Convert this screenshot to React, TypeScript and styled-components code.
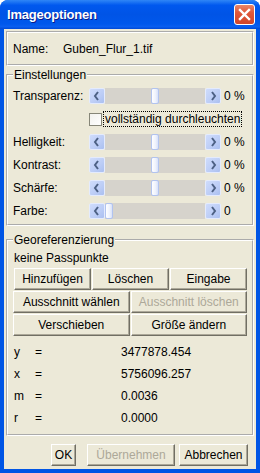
import React from 'react';
import styled, { createGlobalStyle } from 'styled-components';

const GlobalStyle = createGlobalStyle`
  html, body {
    margin: 0;
    padding: 0;
    background: #ffffff;
  }
  body {
    font-family: "Liberation Sans", Arial, sans-serif;
    font-size: 12px;
    color: #000000;
  }
`;

interface SliderRowI {
  label: string;
  value: number;
  min: number;
  max: number;
  unit?: string;
}

const sliders: Array<SliderRowI> = [
  { label: 'Helligkeit:', value: 0, min: -100, max: 100, unit: ' %' },
  { label: 'Kontrast:', value: 0, min: -100, max: 100, unit: ' %' },
  { label: 'Schärfe:', value: 0, min: -100, max: 100, unit: ' %' },
  { label: 'Farbe:', value: 0, min: 0, max: 360 },
];

const coords = [
  { name: 'y', value: '3477878.454' },
  { name: 'x', value: '5756096.257' },
  { name: 'm', value: '0.0036' },
  { name: 'r', value: '0.0000' },
];

const TRACK = 100;
const THUMB = 8;

const Chevron: React.FC<{ dir: 'left' | 'right' }> = ({ dir }) => (
  <svg width="14" height="14" viewBox="0 0 14 14">
    <polyline
      points={dir === 'left' ? '8,3 5,7 8,11' : '6,3 9,7 6,11'}
      fill="none"
      stroke="#4D6185"
      strokeWidth="2"
    />
  </svg>
);

const Slider: React.FC<{ value: number; min: number; max: number }> = ({ value, min, max }) => {
  const left = Math.round(((value - min) / (max - min)) * (TRACK - THUMB));
  return (
    <SliderBox>
      <ArrowButton>
        <Chevron dir="left" />
      </ArrowButton>
      <Track>
        <Thumb style={{ left }} />
      </Track>
      <ArrowButton>
        <Chevron dir="right" />
      </ArrowButton>
    </SliderBox>
  );
};

const App: React.FC = () => {
  return (
    <>
      <GlobalStyle />
      <Window>
        <TitleBar>
          <Title>Imageoptionen</Title>
          <CloseButton>
            <svg width="19" height="19" viewBox="0 0 19 19">
              <path d="M5 5 L14 14 M14 5 L5 14" stroke="#ffffff" strokeWidth="2.4" strokeLinecap="square" />
            </svg>
          </CloseButton>
        </TitleBar>
        <Body>
          <NamePanel>
            <NameLabel>Name:</NameLabel>
            <span>Guben_Flur_1.tif</span>
          </NamePanel>

          <Group $mt={2}>
            <Legend>Einstellungen</Legend>
            <SettingsGrid>
              <RowLabel>Transparenz:</RowLabel>
              <Slider value={0} min={-100} max={100} />
              <RowValue>0 %</RowValue>

              <CheckRow>
                <CheckBox />
                <CheckLabel>vollständig durchleuchten</CheckLabel>
              </CheckRow>

              {sliders.map(s => (
                <React.Fragment key={s.label}>
                  <RowLabel>{s.label}</RowLabel>
                  <Slider value={s.value} min={s.min} max={s.max} />
                  <RowValue>
                    {s.value}
                    {s.unit}
                  </RowValue>
                </React.Fragment>
              ))}
            </SettingsGrid>
          </Group>

          <Group $mt={7}>
            <Legend>Georeferenzierung</Legend>
            <InfoText>keine Passpunkte</InfoText>
            <ButtonGrid $cols={3} $inset={1}>
              <Button>Hinzufügen</Button>
              <Button>Löschen</Button>
              <Button>Eingabe</Button>
            </ButtonGrid>
            <ButtonGrid $cols={2} $inset={0}>
              <Button>Ausschnitt wählen</Button>
              <Button disabled>Ausschnitt löschen</Button>
              <Button>Verschieben</Button>
              <Button>Größe ändern</Button>
            </ButtonGrid>
            <CoordList>
              {coords.map(c => (
                <React.Fragment key={c.name}>
                  <span>{c.name}</span>
                  <span>=</span>
                  <span>{c.value}</span>
                </React.Fragment>
              ))}
            </CoordList>
          </Group>

          <Footer>
            <Button $w={25} $mr={7}>
              OK
            </Button>
            <Button $w={88} disabled>
              Übernehmen
            </Button>
            <Button $w={69}>Abbrechen</Button>
          </Footer>
        </Body>
      </Window>
    </>
  );
};

export default App;

const Window = styled.div`
  width: 260px;
  height: 473px;
  display: flex;
  flex-direction: column;
  background: #0055e5;
  border-radius: 8px 8px 0 0;
  overflow: hidden;
  box-sizing: border-box;
`;

const TitleBar = styled.div`
  height: 29px;
  flex: none;
  display: flex;
  align-items: center;
  justify-content: space-between;
  padding: 0 5px 0 7px;
  background: linear-gradient(
    180deg,
    #2f86f6 0%,
    #1a72f3 8%,
    #0058ee 18%,
    #0054e6 50%,
    #0058ec 82%,
    #0a5ff0 92%,
    #0049d6 100%
  );
`;

const Title = styled.span`
  color: #ffffff;
  font-weight: bold;
  font-size: 13px;
  letter-spacing: -0.2px;
  text-shadow: 1px 1px 0 #0a1b8a;
`;

const CloseButton = styled.div`
  width: 21px;
  height: 21px;
  box-sizing: border-box;
  border: 1px solid #ffffff;
  border-radius: 3px;
  background: linear-gradient(180deg, #e8876b 0%, #e0583a 40%, #d2452a 100%);
  display: flex;
  align-items: center;
  justify-content: center;
`;

const Body = styled.div`
  flex: 1;
  margin: 0 4px 4px;
  padding: 2px 2px 0;
  background: #ece9d8;
  display: flex;
  flex-direction: column;
`;

const NamePanel = styled.div`
  height: 35px;
  box-sizing: border-box;
  border: 2px groove #ffffff;
  display: flex;
  align-items: center;
  padding-left: 5px;
`;

const NameLabel = styled.span`
  width: 50px;
`;

const Group = styled.fieldset<{ $mt: number }>`
  margin: ${({ $mt }) => $mt}px 0 0;
  padding: 0 5px 5px 5px;
  border: 2px groove #ffffff;
  min-width: 0;
  display: flex;
  flex-direction: column;
`;

const Legend = styled.legend`
  padding: 0 1px;
  line-height: 14px;
  font-size: 12px;
`;

const SettingsGrid = styled.div`
  margin-top: 6px;
  display: grid;
  grid-template-columns: 76px 132px 1fr;
  grid-auto-rows: 16px;
  row-gap: 7px;
  align-items: center;
`;

const RowLabel = styled.span`
  line-height: 16px;
`;

const RowValue = styled.span`
  padding-left: 3px;
  line-height: 16px;
`;

const SliderBox = styled.div`
  display: flex;
  height: 16px;
`;

const ArrowButton = styled.div`
  width: 16px;
  height: 16px;
  box-sizing: border-box;
  border: 1px solid #e4ebfd;
  border-radius: 2px;
  background: linear-gradient(135deg, #cfdcfc 0%, #bccdf6 60%, #aabff0 100%);
  display: flex;
  align-items: center;
  justify-content: center;
`;

const Track = styled.div`
  position: relative;
  width: ${TRACK}px;
  height: 16px;
  background: #d6d3cc;
`;

const Thumb = styled.div`
  position: absolute;
  top: 0;
  width: ${THUMB}px;
  height: 16px;
  box-sizing: border-box;
  border: 1px solid #b1c3ef;
  border-radius: 2px;
  background: linear-gradient(90deg, #ffffff 0%, #eef2fd 60%, #d8e1f8 100%);
`;

const CheckRow = styled.div`
  grid-column: 2 / 4;
  display: flex;
  align-items: center;
  gap: 1px;
`;

const CheckBox = styled.div`
  width: 13px;
  height: 13px;
  box-sizing: border-box;
  border: 1px solid #868678;
  background: linear-gradient(135deg, #f2f2ee 0%, #ffffff 100%);
`;

const CheckLabel = styled.span`
  border: 1px dotted #000000;
  padding: 0 1px 0 1px;
  line-height: 14px;
  height: 14px;
`;

const InfoText = styled.div`
  margin-top: 4px;
  padding-left: 1px;
  line-height: 14px;
`;

const ButtonGrid = styled.div<{ $cols: number; $inset: number }>`
  display: grid;
  grid-template-columns: repeat(${({ $cols }) => $cols}, 1fr);
  grid-auto-rows: 22px;
  gap: 1px;
  margin-left: ${({ $inset }) => $inset}px;
  margin-top: ${({ $inset }) => ($inset ? 3 : 1)}px;
`;

const Button = styled.button<{ $w?: number; $mr?: number }>`
  ${({ $w }) => ($w ? `width: ${$w}px;` : '')}
  ${({ $mr }) => ($mr ? `margin-right: ${$mr}px;` : '')}
  height: 22px;
  padding: 0;
  box-sizing: border-box;
  font-family: "Liberation Sans", Arial, sans-serif;
  font-size: 12px;
  color: #000000;
  background: #ece9d8;
  border: 1px solid;
  border-color: #ffffff #716f64 #716f64 #ffffff;
  box-shadow: inset -1px -1px 0 #aca899;
  white-space: nowrap;

  &:disabled {
    color: #aca899;
  }
`;

const CoordList = styled.div`
  margin-top: 5px;
  padding-left: 1px;
  display: grid;
  grid-template-columns: 21px 86px 1fr;
  grid-auto-rows: 22px;
  align-items: center;
`;

const Footer = styled.div`
  margin-top: 8px;
  padding-right: 6px;
  display: flex;
  justify-content: flex-end;
  gap: 4px;
`;
